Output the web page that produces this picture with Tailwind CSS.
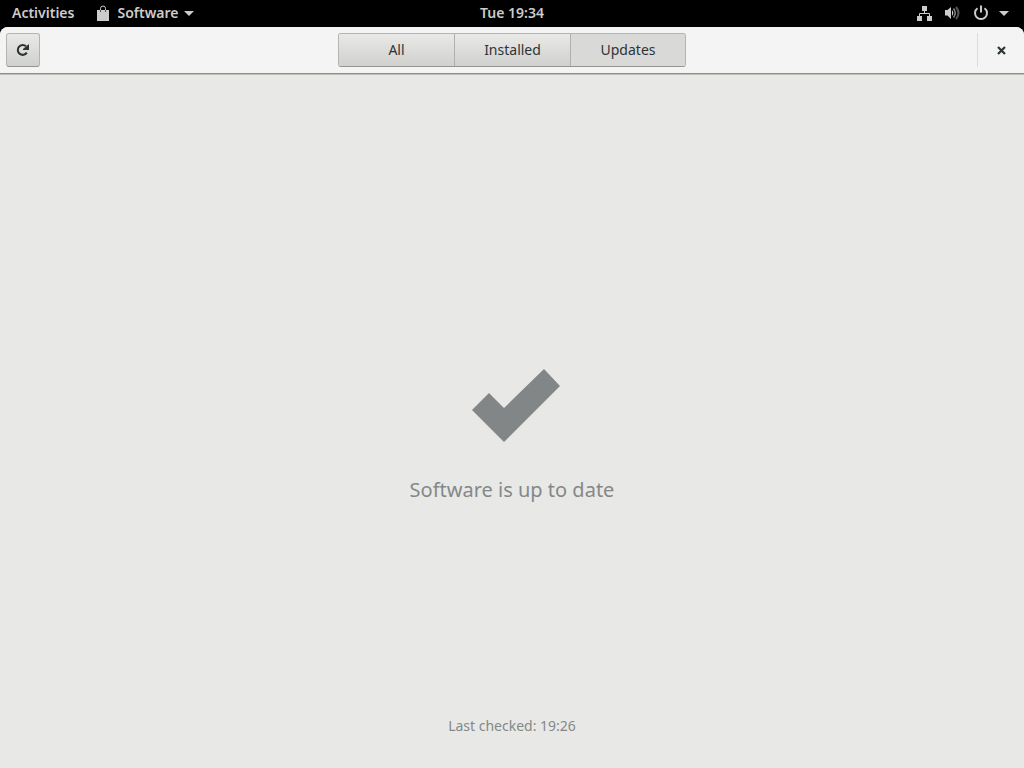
<!DOCTYPE html>
<html lang="en">
<head>
<meta charset="utf-8">
<meta name="viewport" content="width=device-width, initial-scale=1">
<title>Software</title>
<script src="https://cdn.jsdelivr.net/npm/@tailwindcss/browser@4"></script>
</head>
<body class="flex h-screen flex-col overflow-hidden bg-black font-['Noto_Sans','Open_Sans',sans-serif] text-sm text-[#2e3436]">
  <header class="grid h-[27px] shrink-0 grid-cols-[1fr_auto_1fr] items-center bg-black pb-px text-sm font-semibold text-[#cccccc]">
    <div class="flex items-center pl-3">
      <button type="button">Activities</button>
      <button type="button" class="ml-[23px] flex items-center">
        <svg class="mr-2 h-4 w-3" viewBox="0 0 12 16" aria-hidden="true">
          <path d="M0 5h12v11H0z" fill="#ccc"/>
          <path d="M3.500 5V3.500a2.500 2.500 0 0 1 5 0V5" fill="none" stroke="#ccc" stroke-width="1"/>
          <path d="M3.500 5v2M8.500 5v2" stroke="#555" stroke-width="1"/>
        </svg>
        Software
        <svg class="ml-[6px] h-[5px] w-[10px]" viewBox="0 0 10 5" fill="#ccc" aria-hidden="true"><path d="M0 0h10L5 5z"/></svg>
      </button>
    </div>
    <button type="button">Tue 19:34</button>
    <button type="button" class="flex items-center justify-self-end pr-[15px]" aria-label="System menu">
      <svg class="mr-[11px] h-4 w-4" viewBox="0 0 16 16" aria-hidden="true">
        <path d="M5 1h5v5H5zM0 11h5v5H0zM10 11h5v5h-5z" fill="#ccc"/>
        <path d="M2.500 11V8.500h10V11M7.500 6v2.500" fill="none" stroke="#ccc"/>
      </svg>
      <svg class="mr-[13px] h-4 w-4" viewBox="0 0 16 16" fill="none" aria-hidden="true">
        <path d="M1 5h2.500L7 2v12l-3.500-3.500H1z" fill="#ccc"/>
        <path d="M8 5q2.500 3 0 6z" fill="#ccc"/>
        <path d="M9.500 3.500q3.500 4.500 0 9" stroke="#888" stroke-width="1.500"/>
        <path d="M12 2q5 6 0 12" stroke="#555" stroke-width="2"/>
      </svg>
      <svg class="mr-[10px] h-4 w-4" viewBox="0 0 16 16" fill="none" stroke="#ccc" stroke-width="2" aria-hidden="true">
        <path d="M4.500 3.200a6 6 0 1 0 7 0M8 0.500v7"/>
      </svg>
      <svg class="h-[5px] w-[10px]" viewBox="0 0 10 5" fill="#ccc" aria-hidden="true"><path d="M0 0h10L5 5z"/></svg>
    </button>
  </header>

  <div class="flex min-h-0 grow flex-col overflow-hidden rounded-t-lg bg-[#e8e8e7]">
    <div class="grid h-[47px] shrink-0 grid-cols-[1fr_auto_1fr] items-center border-b border-[#8f8f88] bg-[#f4f4f4] px-1.5">
      <button type="button" aria-label="Refresh" class="flex size-[34px] items-center justify-center rounded-[3px] border border-[#b4b4b1] border-b-[#95958e] bg-linear-to-b from-[#e9e9e8] to-[#d0d0ce]">
        <svg class="size-4" viewBox="0 0 16 16" aria-hidden="true">
          <path d="M11.800 10.600A4.900 4.900 0 1 1 11 4.300" fill="none" stroke="#2e3436" stroke-width="2.100"/>
          <path d="M14 2v6H8V7z" fill="#2e3436"/>
        </svg>
      </button>
      <nav class="grid h-[34px] w-[348px] grid-cols-[116px_116px_1fr] overflow-hidden rounded-[3px] border border-[#b4b4b1] border-b-[#95958e]" aria-label="Views">
        <button type="button" class="border-r border-[#b0b0ad] bg-linear-to-b from-[#e9e9e8] to-[#d0d0ce]">All</button>
        <button type="button" class="border-r border-[#b0b0ad] bg-linear-to-b from-[#e9e9e8] to-[#d0d0ce]">Installed</button>
        <button type="button" aria-pressed="true" class="bg-[#d9d9d8]">Updates</button>
      </nav>
      <div class="flex h-[34px] items-center justify-self-end border-l border-[#dcdcdb] pr-3 pl-[19px]">
        <button type="button" aria-label="Close">
          <svg class="block h-[9px] w-[9px]" viewBox="0 0 9 9" aria-hidden="true"><path d="M1 1l7 7M8 1l-7 7" stroke="#2e3436" stroke-width="2.200"/></svg>
        </button>
      </div>
    </div>
    <main class="flex grow flex-col items-center border-t border-[#bdbdba] text-[#848888]">
      <div class="flex grow flex-col items-center justify-center pt-[82px]">
        <svg class="mb-[34px] h-[73px] w-[88px] translate-x-1" viewBox="0 0 88 73" fill="#828686" aria-hidden="true"><path d="M0 41L17 24L32 39L72 0L88 17L32 73z"/></svg>
        <h1 class="text-xl">Software is up to date</h1>
      </div>
      <p class="pb-8">Last checked: 19:26</p>
    </main>
  </div>
</body>
</html>
